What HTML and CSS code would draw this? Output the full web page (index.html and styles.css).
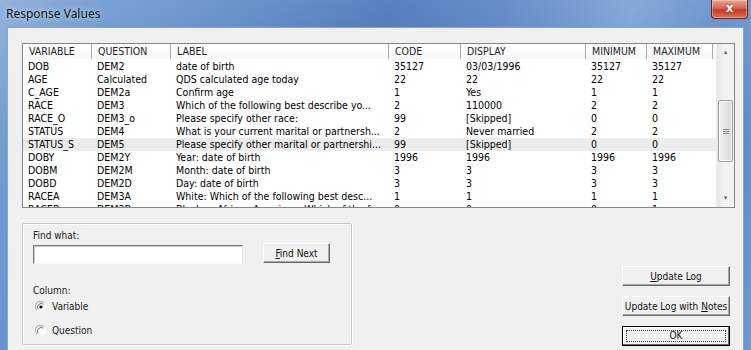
FILE: index.html
```html
<!DOCTYPE html>
<html lang="en">
<head>
    <meta charset="UTF-8">
    <title>Response Values</title>
    <link rel="stylesheet" href="styles.css">
</head>
<body>
<div class="window">
    <div class="titlebar">
        <span class="title">Response Values</span>
        <span class="close">x</span>
    </div>
    <div class="client">
        <div class="list">
            <div class="table">
                <div class="row header">
                    <div>VARIABLE</div><div>QUESTION</div><div>LABEL</div><div>CODE</div><div>DISPLAY</div><div>MINIMUM</div><div>MAXIMUM</div><div></div>
                </div>
                <div class="body">
                    <div class="row"><div>DOB</div><div>DEM2</div><div>date of birth</div><div>35127</div><div>03/03/1996</div><div>35127</div><div>35127</div></div>
                    <div class="row"><div>AGE</div><div>Calculated</div><div>QDS calculated age today</div><div>22</div><div>22</div><div>22</div><div>22</div></div>
                    <div class="row"><div>C_AGE</div><div>DEM2a</div><div>Confirm age</div><div>1</div><div>Yes</div><div>1</div><div>1</div></div>
                    <div class="row"><div>RACE</div><div>DEM3</div><div>Which of the following best describe yo...</div><div>2</div><div>110000</div><div>2</div><div>2</div></div>
                    <div class="row"><div>RACE_O</div><div>DEM3_o</div><div>Please specify other race:</div><div>99</div><div>[Skipped]</div><div>0</div><div>0</div></div>
                    <div class="row"><div>STATUS</div><div>DEM4</div><div>What is your current marital or partnersh...</div><div>2</div><div>Never married</div><div>2</div><div>2</div></div>
                    <div class="row selected"><div>STATUS_S</div><div>DEM5</div><div>Please specify other marital or partnershi...</div><div>99</div><div>[Skipped]</div><div>0</div><div>0</div></div>
                    <div class="row"><div>DOBY</div><div>DEM2Y</div><div>Year: date of birth</div><div>1996</div><div>1996</div><div>1996</div><div>1996</div></div>
                    <div class="row"><div>DOBM</div><div>DEM2M</div><div>Month: date of birth</div><div>3</div><div>3</div><div>3</div><div>3</div></div>
                    <div class="row"><div>DOBD</div><div>DEM2D</div><div>Day: date of birth</div><div>3</div><div>3</div><div>3</div><div>3</div></div>
                    <div class="row"><div>RACEA</div><div>DEM3A</div><div>White: Which of the following best desc...</div><div>1</div><div>1</div><div>1</div><div>1</div></div>
                    <div class="row"><div>RACEB</div><div>DEM3B</div><div>Black or African American: Which of the f...</div><div>0</div><div>0</div><div>0</div><div>1</div></div>
                </div>
            </div>
            <div class="scrollbar">
                <div class="arrow">&#9652;</div>
                <div class="track">
                    <div class="thumb"><span class="grip"></span></div>
                </div>
                <div class="arrow">&#9662;</div>
            </div>
        </div>

        <div class="bottom">
            <div class="group">
                <div class="caption">Find what:</div>
                <div class="find-row">
                    <div class="textbox"></div>
                    <button class="btn find"><u>F</u>ind Next</button>
                </div>
                <div class="caption column">Column:</div>
                <div class="radio first">
                    <svg width="12" height="12" viewBox="0 0 12 12">
                        <path d="M1.8 9.2 A5 5 0 0 1 9.2 1.8" fill="none" stroke="#9c9c9c" stroke-width="1"/>
                        <path d="M9.6 2.4 A5 5 0 0 1 2.4 9.6" fill="none" stroke="#ffffff" stroke-width="1"/>
                        <circle cx="6" cy="6" r="3.8" fill="#ffffff"/>
                        <path d="M3.2 8.2 A3.6 3.6 0 0 1 8.2 3.2" fill="none" stroke="#505050" stroke-width="0.9"/>
                        <circle cx="6" cy="6" r="1.6" fill="#000000"/>
                    </svg>
                    <span>Variable</span>
                </div>
                <div class="radio second">
                    <svg width="12" height="12" viewBox="0 0 12 12">
                        <path d="M1.8 9.2 A5 5 0 0 1 9.2 1.8" fill="none" stroke="#9c9c9c" stroke-width="1"/>
                        <path d="M9.6 2.4 A5 5 0 0 1 2.4 9.6" fill="none" stroke="#ffffff" stroke-width="1"/>
                        <circle cx="6" cy="6" r="3.8" fill="#ffffff"/>
                        <path d="M3.2 8.2 A3.6 3.6 0 0 1 8.2 3.2" fill="none" stroke="#505050" stroke-width="0.9"/>
                    </svg>
                    <span>Question</span>
                </div>
            </div>
            <div class="actions">
                <button class="btn wide"><u>U</u>pdate Log</button>
                <button class="btn wide">Update Log with <u>N</u>otes</button>
                <button class="btn wide default"><span class="focus">OK</span></button>
            </div>
        </div>
    </div>
</div>
</body>
</html>
```

FILE: styles.css
```css
* {
    box-sizing: border-box;
}

html, body {
    margin: 0;
    padding: 0;
}

body {
    width: 751px;
    height: 350px;
    overflow: hidden;
    font-family: "DejaVu Sans Condensed", "DejaVu Sans", sans-serif;
    font-size: 10.5px;
    color: #000;
}

.window {
    width: 751px;
    height: 350px;
    display: flex;
    flex-direction: column;
    background:
        linear-gradient(180deg, rgba(255, 255, 255, 0.18) 0%, rgba(255, 255, 255, 0) 40%),
        linear-gradient(100deg, #7aa2d2 0%, #5f8ecb 12%, #4a7cc0 30%, #3767b1 48%, #4676bd 62%, #6b97cf 78%, #4e80c3 90%, #6f9ad0 100%);
}

/* title bar */

.titlebar {
    height: 27px;
    display: flex;
    align-items: flex-start;
}

.title {
    margin: 5px 0 0 6px;
    font-family: "Noto Sans", "Open Sans", sans-serif;
    font-size: 12px;
    color: #101820;
    text-shadow: 0 0 6px rgba(255, 255, 255, 0.8);
}

.close {
    margin-left: auto;
    margin-right: 3px;
    width: 37px;
    height: 19px;
    border: 1px solid #6a241c;
    border-top: none;
    border-radius: 0 0 4px 4px;
    background: linear-gradient(180deg, #e8a595 0%, #d46a55 45%, #c23b22 55%, #d9704f 100%);
    box-shadow: inset 0 0 0 1px rgba(255, 255, 255, 0.35);
    color: #fff;
    font-family: "DejaVu Sans", sans-serif;
    font-weight: bold;
    font-size: 12px;
    line-height: 16px;
    text-align: center;
    text-shadow: 0 0 2px #5a1a10;
}

/* client area */

.client {
    flex: 1;
    margin: 0 7px;
    background: #f0f0f0;
    border: 1px solid #8ea6c6;
    border-bottom: none;
    padding: 15px 8px 0 14px;
}

.list {
    height: 165px;
    border: 1px solid #828790;
    background: #fff;
    display: flex;
}

.table {
    flex: 1;
    overflow: hidden;
}

.row {
    display: grid;
    grid-template-columns: 69px 79px 218px 72px 125px 61px 66px 1fr;
    height: 13px;
    line-height: 13px;
    white-space: nowrap;
}

.row > div {
    padding: 0 5px;
    overflow: hidden;
}

.header {
    height: 15px;
    line-height: 14px;
    background: linear-gradient(180deg, #ffffff 0%, #f6f7f8 100%);
    color: #1e1e1e;
}

.header > div {
    border-right: 1px solid #a9a9a9;
    padding-left: 6px;
}

.header > div:last-child {
    border-right: none;
}

.body {
    height: 148px;
    overflow: hidden;
    padding-top: 1px;
}

.row.selected {
    background: #ececec;
}

/* scrollbar */

.scrollbar {
    width: 18px;
    background: linear-gradient(90deg, #e6e6e6 0%, #f3f3f3 40%, #f3f3f3 100%);
    border-left: 1px solid #ececec;
    display: flex;
    flex-direction: column;
}

.arrow {
    height: 17px;
    line-height: 17px;
    text-align: center;
    font-size: 7px;
    color: #5a5a5a;
}

.track {
    flex: 1;
    padding: 39px 1px 0;
}

.thumb {
    height: 62px;
    border: 1px solid #9c9c9c;
    border-radius: 2px;
    background: linear-gradient(90deg, #f0f0f0 0%, #e4e4e4 50%, #d6d6d6 100%);
    box-shadow: inset 0 0 0 1px #fafafa;
    display: flex;
    align-items: center;
    justify-content: center;
}

.grip {
    width: 6px;
    height: 5px;
    border-top: 1px solid #8a8a8a;
    border-bottom: 1px solid #8a8a8a;
}

.grip::after {
    content: "";
    display: block;
    margin-top: 1px;
    border-top: 1px solid #8a8a8a;
}

/* lower section */

.bottom {
    display: flex;
    justify-content: space-between;
    align-items: flex-start;
    margin-top: 15px;
    padding-right: 5px;
    font-size: 10px;
}

.group {
    width: 330px;
    height: 122px;
    border: 1px solid #c8c8c8;
    border-radius: 2px;
    box-shadow: inset 1px 1px 0 #fff, 1px 1px 0 #fff;
    padding: 5px 10px;
}

.caption {
    height: 13px;
    line-height: 13px;
    color: #202020;
}

.caption.column {
    margin-top: 20px;
}

.find-row {
    display: flex;
    align-items: center;
    gap: 20px;
    height: 22px;
}

.textbox {
    width: 210px;
    height: 19px;
    background: #fff;
    border-top: 1px solid #7a7a7a;
    border-left: 1px solid #7a7a7a;
    border-right: 1px solid #e6e6e6;
    border-bottom: 1px solid #f8f8f8;
    box-shadow: inset 1px 1px 0 #c8c8c8;
    margin-top: 2px;
}

.btn {
    font-family: inherit;
    font-size: 10px;
    color: #111;
    background: #f0f0f0;
    border-top: 1px solid #ffffff;
    border-left: 1px solid #ffffff;
    border-right: 1px solid #6a6a6a;
    border-bottom: 1px solid #6a6a6a;
    box-shadow: inset -1px -1px 0 #a8a8a8;
    padding: 0;
    height: 20px;
}

.btn.find {
    width: 67px;
}

.radio {
    display: flex;
    align-items: center;
    gap: 5px;
    height: 13px;
    padding-left: 2px;
    color: #202020;
}

.radio.first {
    margin-top: 3px;
}

.radio.second {
    margin-top: 11px;
}

.actions {
    display: flex;
    flex-direction: column;
    gap: 10px;
    margin-top: 43px;
}

.btn.wide {
    width: 108px;
}

.btn.default {
    border: 1px solid #000;
    box-shadow: inset -1px -1px 0 #6a6a6a, inset 1px 1px 0 #fff;
    padding: 3px;
}

.focus {
    display: block;
    height: 100%;
    line-height: 10px;
    border: 1px dotted #333;
}
```
